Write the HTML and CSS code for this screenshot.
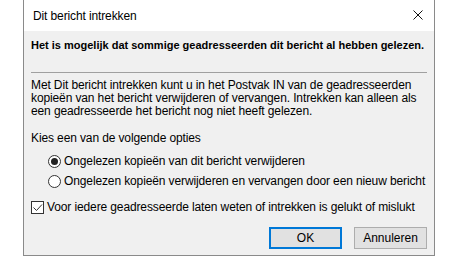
FILE: index.html
```html
<!DOCTYPE html>
<html lang="nl">
<head>
    <meta charset="UTF-8">
    <title>Dit bericht intrekken</title>
    <link rel="stylesheet" href="styles.css">
</head>
<body>
    <div class="dialog">
        <div class="titlebar">
            <span class="title">Dit bericht intrekken</span>
            <svg class="close" width="10" height="10" viewBox="0 0 10 10">
                <path d="M0.5 0.5 L9.5 9.5 M9.5 0.5 L0.5 9.5" stroke="#111" stroke-width="1"/>
            </svg>
        </div>
        <div class="content">
            <p class="warning">Het is mogelijk dat sommige geadresseerden dit bericht al hebben gelezen.</p>
            <hr class="sep">
            <p class="info">Met Dit bericht intrekken kunt u in het Postvak IN van de geadresseerden<br>kopieën van het bericht verwijderen of vervangen. Intrekken kan alleen als<br>een geadresseerde het bericht nog niet heeft gelezen.</p>
            <p class="label">Kies een van de volgende opties</p>
            <div class="options">
                <div class="option">
                    <span class="radio checked"></span>
                    <span>Ongelezen kopieën van dit bericht verwijderen</span>
                </div>
                <div class="option">
                    <span class="radio"></span>
                    <span>Ongelezen kopieën verwijderen en vervangen door een nieuw bericht</span>
                </div>
            </div>
            <div class="check-row">
                <span class="checkbox">
                    <svg width="11" height="11" viewBox="0 0 11 11">
                        <path d="M1.5 5.5 L4.5 8.5 L10 2.5" fill="none" stroke="#333" stroke-width="1"/>
                    </svg>
                </span>
                <span>Voor iedere geadresseerde laten weten of intrekken is gelukt of mislukt</span>
            </div>
            <div class="buttons">
                <button class="btn default">OK</button>
                <button class="btn">Annuleren</button>
            </div>
        </div>
    </div>
</body>
</html>
```

FILE: styles.css
```css
body {
    margin: 0;
    background-color: #fff;
    font-family: "Liberation Sans", Arial, sans-serif;
    font-size: 12px;
    color: #000;
}
.dialog {
    margin-left: 23px;
    width: 410px;
    height: 255px;
    border: 1px solid #8a8a8a;
    border-top: none;
    background-color: #f0f0f0;
    white-space: nowrap;
    letter-spacing: -0.12px;
}
.titlebar {
    height: 31px;
    background-color: #fff;
    display: flex;
    align-items: center;
    justify-content: space-between;
    padding: 0 11px 0 9px;
}
.title {
    margin-top: 1px;
}
.close {
    margin-top: -1px;
}
.content {
    padding: 0 7px;
}
p {
    margin: 0;
}
.warning {
    font-weight: bold;
    font-size: 11px;
    letter-spacing: 0;
    line-height: 16px;
    margin-top: 6px;
}
.sep {
    border: none;
    border-top: 1px solid #a0a0a0;
    margin: 19px 0 0 0;
}
.info {
    line-height: 13px;
    margin-top: 6px;
}
.label {
    line-height: 16px;
    margin-top: 12px;
}
.options {
    display: flex;
    flex-direction: column;
    gap: 4px;
    margin-top: 7px;
    padding-left: 17px;
}
.option, .check-row {
    display: flex;
    align-items: center;
    gap: 3px;
    line-height: 16px;
}
.radio {
    flex-shrink: 0;
    width: 11px;
    height: 11px;
    border: 1px solid #333;
    border-radius: 50%;
    background-color: #fff;
    display: flex;
    align-items: center;
    justify-content: center;
}
.radio.checked::after {
    content: "";
    width: 7px;
    height: 7px;
    border-radius: 50%;
    background-color: #222;
}
.check-row {
    margin-top: 10px;
}
.checkbox {
    flex-shrink: 0;
    width: 11px;
    height: 11px;
    border: 1px solid #333;
    background-color: #fff;
    display: flex;
}
.buttons {
    display: flex;
    justify-content: flex-end;
    gap: 12px;
    margin-top: 12px;
}
.btn {
    width: 73px;
    height: 22px;
    font-family: inherit;
    font-size: 12px;
    background-color: #e1e1e1;
    border: 1px solid #adadad;
    padding: 0;
    color: #000;
}
.btn.default {
    border: 2px solid #0078d7;
}
```
